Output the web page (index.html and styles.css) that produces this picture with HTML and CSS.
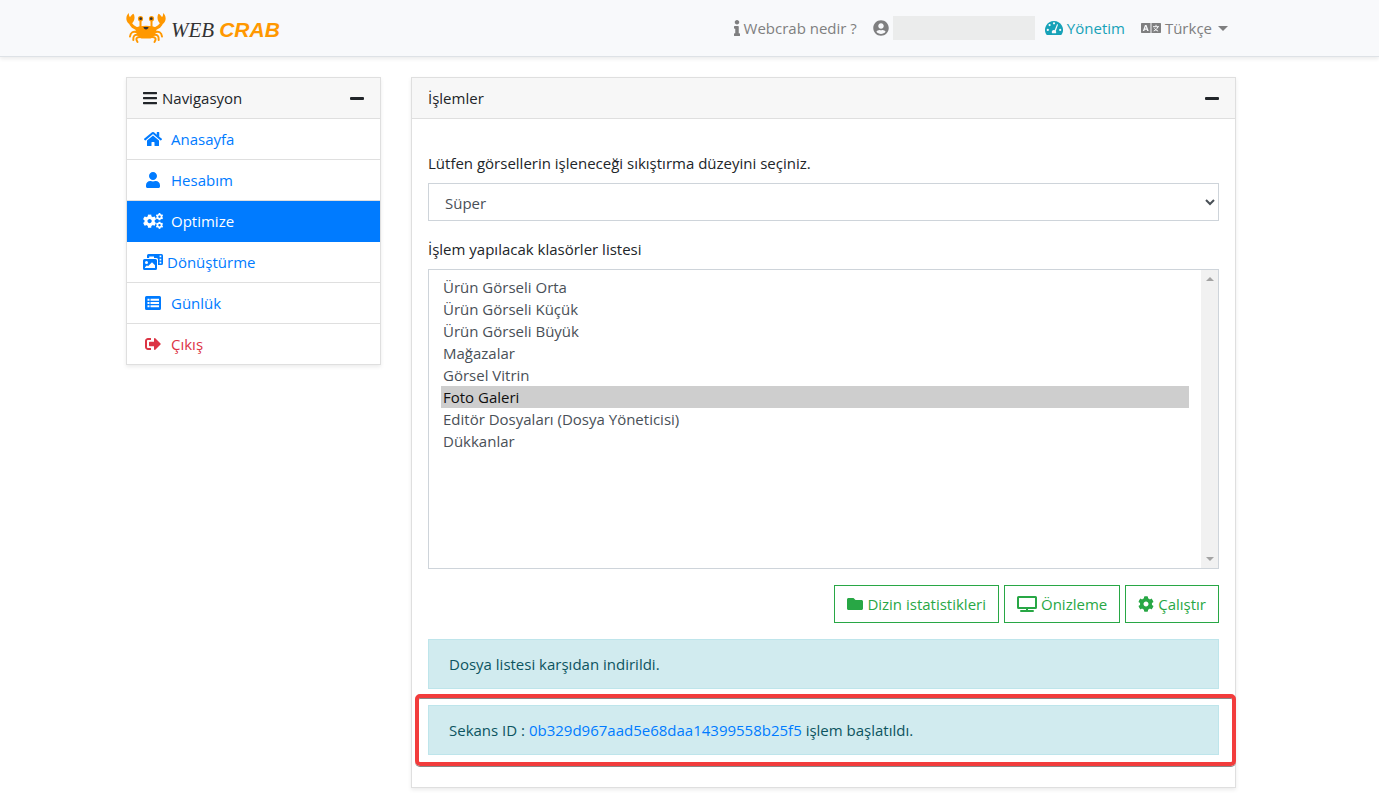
FILE: index.html
```html
<!DOCTYPE html>
<html lang="tr">
<head>
<meta charset="utf-8">
<title>Web Crab</title>
<meta name="viewport" content="width=device-width, initial-scale=1">
<link rel="stylesheet" href="styles.css">
</head>
<body>
<svg class="sprite" aria-hidden="true">
  <symbol id="cog" viewBox="0 0 512 512"><path d="M487.4 315.7l-42.6-24.6c4.3-23.2 4.3-47 0-70.2l42.6-24.6c4.9-2.8 7.1-8.6 5.5-14-11.1-35.6-30-67.8-54.7-94.6-3.8-4.1-10-5.1-14.8-2.3L380.8 110c-17.9-15.4-38.5-27.3-60.8-35.1V25.8c0-5.6-3.9-10.5-9.4-11.7-36.7-8.2-74.3-7.8-109.2 0-5.5 1.2-9.4 6.1-9.4 11.7V75c-22.2 7.9-42.8 19.8-60.8 35.1L88.7 85.5c-4.9-2.8-11-1.9-14.8 2.3-24.7 26.7-43.6 58.9-54.7 94.6-1.7 5.4.6 11.2 5.5 14L67.3 221c-4.3 23.2-4.3 47 0 70.2l-42.6 24.6c-4.9 2.8-7.1 8.6-5.5 14 11.1 35.6 30 67.8 54.7 94.6 3.8 4.1 10 5.1 14.8 2.3l42.6-24.6c17.9 15.4 38.5 27.3 60.8 35.1v49.2c0 5.6 3.9 10.5 9.4 11.7 36.7 8.2 74.3 7.8 109.2 0 5.5-1.2 9.4-6.1 9.4-11.7v-49.2c22.2-7.9 42.8-19.8 60.8-35.1l42.6 24.6c4.9 2.8 11 1.9 14.8-2.3 24.7-26.7 43.6-58.9 54.7-94.6 1.5-5.5-.7-11.3-5.6-14.1zM256 336c-44.1 0-80-35.9-80-80s35.9-80 80-80 80 35.9 80 80-35.9 80-80 80z"/></symbol>
</svg>

<header class="navbar">
  <div class="container navbar-inner">
    <a class="brand" href="#">
      <svg class="crab" viewBox="0 0 40 32" aria-hidden="true">
        <g fill="none" stroke="#ff9800" stroke-width="2" stroke-linecap="round">
          <path d="M4 10C5 14 7.500 15.500 13 17.500M36 10C35 14 32.500 15.500 27 17.500" stroke-width="3"/>
          <path d="M14.500 8v7M25.500 8v7"/>
          <path d="M12 20.500C7 18.500 4.500 20.500 4 24.500M28 20.500C33 18.500 35.500 20.500 36 24.500"/>
          <path d="M13 23C8.500 22 7 24 7.300 28M27 23C31.500 22 33 24 32.700 28"/>
          <path d="M14 25C10 25 9.500 27 11.500 30M26 25C30 25 30.500 27 28.500 30"/>
        </g>
        <g fill="#ff9800">
          <path d="M2.500 11.500C-1 8 .2 3 3 1c-.3 1.800 0 3 1 4.200C5 3.500 6 2.400 7.500 1.700 9.500 5 8.500 9 5.500 12z"/>
          <path d="M37.500 11.500C41 8 39.800 3 37 1c.3 1.800 0 3-1 4.200-1-1.700-2-2.800-3.500-3.500C30.500 5 31.500 9 34.500 12z"/>
          <path d="M9.500 15.800C13 13 27 13 30.500 15.800 31 20 28 25.500 24.500 26.500h-9C12 25.500 9 20 9.500 15.800z"/>
          <circle cx="14.500" cy="6.700" r="2.600"/><circle cx="25.500" cy="6.700" r="2.600"/>
        </g>
        <g fill="#333"><circle cx="14.700" cy="6.700" r="1.400"/><circle cx="25.300" cy="6.700" r="1.400"/><path d="M17.500 15h5c0 3.200-5 3.200-5 0z"/></g>
      </svg>
      <span class="brand-web">WEB</span>
      <span class="brand-crab">CRAB</span>
    </a>
    <nav class="top-nav">
      <a class="top-link" href="#"><svg class="i-info" viewBox="0 0 192 512" aria-hidden="true"><path d="M20 424.229h20V279.771H20c-11.046 0-20-8.954-20-20V212c0-11.046 8.954-20 20-20h112c11.046 0 20 8.954 20 20v212.229h20c11.046 0 20 8.954 20 20V492c0 11.046-8.954 20-20 20H20c-11.046 0-20-8.954-20-20v-47.771c0-11.046 8.954-20 20-20zM96 0C56.235 0 24 32.235 24 72s32.235 72 72 72 72-32.235 72-72S135.764 0 96 0z"/></svg>Webcrab nedir ?</a>
      <a class="top-link top-link-user" href="#" aria-label="Kullanıcı"><svg class="i-16" viewBox="0 0 496 512" aria-hidden="true"><path d="M248 8C111 8 0 119 0 256s111 248 248 248 248-111 248-248S385 8 248 8zm0 96c48.6 0 88 39.4 88 88s-39.4 88-88 88-88-39.4-88-88 39.400-88 88-88zm0 344c-58.700 0-111.300-26.600-146.500-68.200 18.800-35.400 55.600-59.800 98.500-59.800 2.400 0 4.800.4 7.100 1.100 13 4.200 26.600 6.900 40.900 6.900 14.300 0 28-2.700 40.900-6.900 2.300-.7 4.700-1.100 7.100-1.100 42.900 0 79.700 24.400 98.500 59.800C359.300 421.400 306.700 448 248 448z"/></svg><span class="user-name"></span></a>
      <a class="top-link top-link-info" href="#"><svg class="i-18" viewBox="0 0 18 16" aria-hidden="true"><path fill-rule="evenodd" d="M9 1a9 9 0 0 0-7.700 13.600c.2.300.5.400.8.400h13.800c.3 0 .6-.1.800-.4A9 9 0 0 0 9 1zM9 2.200a1.100 1.100 0 1 1 0 2.200 1.100 1.100 0 0 1 0-2.200zM4.600 4a1.100 1.100 0 1 1 0 2.200 1.100 1.100 0 0 1 0-2.200zM2.800 8.800a1.100 1.100 0 1 1 0 2.200 1.100 1.100 0 0 1 0-2.200zM15.200 8.800a1.100 1.100 0 1 1 0 2.200 1.100 1.100 0 0 1 0-2.200zM12 4.200l1.100.4-2.300 6.500c.5.700.5 1.500.1 2.200H7.100c-.7-1.300-.1-2.900 1.400-3.200.4-.1.800 0 1.100.1z"/></svg>Yönetim</a>
      <button class="top-link" type="button"><svg class="i-20" viewBox="0 0 20 16" aria-hidden="true"><path fill-rule="evenodd" d="M.7 3h8.800v10H.7a.7.700 0 0 1-.7-.7V3.700A.7.700 0 0 1 .7 3zm3.300 2L1.800 11h1.500l.4-1.200h2.100l.4 1.200h1.500L5.500 5zM4.750 6.500l.7 2.100H4.050zM10.500 3h8.800a.7.700 0 0 1 .7.7v8.600a.7.700 0 0 1-.7.700h-8.800z"/><path class="knock" d="M15 4.800v1.500M12 6.700h6M16.800 6.900c-.7 2-2.200 3.400-4.100 4.100M13.400 8.200c.8 1.400 2 2.300 3.700 2.900"/></svg>Türkçe<span class="caret"></span></button>
    </nav>
  </div>
</header>

<main class="container page">
  <aside class="card sidebar">
    <div class="card-header">
      <span class="card-title"><svg class="i-14" viewBox="0 0 448 512" aria-hidden="true"><path d="M16 132h416c8.837 0 16-7.163 16-16V76c0-8.837-7.163-16-16-16H16C7.163 60 0 67.163 0 76v40c0 8.837 7.163 16 16 16zm0 160h416c8.837 0 16-7.163 16-16v-40c0-8.837-7.163-16-16-16H16c-8.837 0-16 7.163-16 16v40c0 8.837 7.163 16 16 16zm0 160h416c8.837 0 16-7.163 16-16v-40c0-8.837-7.163-16-16-16H16c-8.837 0-16 7.163-16 16v40c0 8.837 7.163 16 16 16z"/></svg>Navigasyon</span>
      <button class="collapse" type="button" aria-label="Daralt"><span class="minus"></span></button>
    </div>
    <nav class="side-nav">
      <a class="side-link" href="#"><svg class="i-20" viewBox="-32 0 640 512" aria-hidden="true"><path d="M280.370 148.260L96 300.110V464a16 16 0 0 0 16 16l112.060-.29a16 16 0 0 0 15.920-16V368a16 16 0 0 1 16-16h64a16 16 0 0 1 16 16v95.640a16 16 0 0 0 16 16.050L464 480a16 16 0 0 0 16-16V300L295.670 148.260a12.190 12.190 0 0 0-15.300 0zM571.600 251.470L488 182.560V44.050a12 12 0 0 0-12-12h-56a12 12 0 0 0-12 12v72.610L318.470 43a48 48 0 0 0-61 0L4.340 251.470a12 12 0 0 0-1.600 16.900l25.500 31A12 12 0 0 0 45.150 301l235.220-193.740a12.190 12.190 0 0 1 15.300 0L530.900 301a12 12 0 0 0 16.900-1.600l25.500-31a12 12 0 0 0-1.700-16.930z"/></svg>Anasayfa</a>
      <a class="side-link" href="#"><svg class="i-20" viewBox="-96 0 640 512" aria-hidden="true"><path d="M224 256c70.700 0 128-57.300 128-128S294.700 0 224 0 96 57.300 96 128s57.300 128 128 128zm89.600 32h-16.700c-22.200 10.200-46.900 16-72.900 16s-50.600-5.800-72.900-16h-16.700C60.200 288 0 348.200 0 422.400V464c0 26.500 21.500 48 48 48h352c26.500 0 48-21.500 48-48v-41.600c0-74.200-60.200-134.400-134.400-134.400z"/></svg>Hesabım</a>
      <a class="side-link active" href="#" aria-current="page"><svg class="i-20" viewBox="0 0 20 16" aria-hidden="true"><use href="#cog" x="-0.300" y="1.200" width="13.800" height="13.800"/><use href="#cog" x="12.700" y="0" width="7.600" height="7.600"/><use href="#cog" x="12.700" y="8.400" width="7.600" height="7.600"/></svg>Optimize</a>
      <a class="side-link side-link-tight" href="#"><svg class="i-20" viewBox="0 0 20 16" aria-hidden="true"><path fill-rule="evenodd" d="M5.500 0h13A1.500 1.500 0 0 1 20 1.500v8a1.500 1.500 0 0 1-1.500 1.500H15V5.500A1.500 1.500 0 0 0 13.500 4H11V2.500H6.200V4H4V1.500A1.500 1.500 0 0 1 5.500 0zM16.600 1.600v1.700h1.700V1.600zM16.600 4.700v1.700h1.700V4.700zM16.600 7.800v1.700h1.700V7.800zM1.500 5h11A1.500 1.500 0 0 1 14 6.500v8a1.500 1.500 0 0 1-1.500 1.500h-11A1.500 1.500 0 0 1 0 14.500v-8A1.500 1.500 0 0 1 1.500 5zM3.500 7a1.500 1.500 0 1 0 0 3 1.500 1.500 0 0 0 0-3zM2 14h10v-2.700L9 8.300l-4 4-1-1-2 2z"/></svg>Dönüştürme</a>
      <a class="side-link" href="#"><svg class="i-20" viewBox="0 0 20 16" aria-hidden="true"><path fill-rule="evenodd" d="M3.500 1h13A1.500 1.500 0 0 1 18 2.500v11a1.500 1.500 0 0 1-1.500 1.500h-13A1.500 1.500 0 0 1 2 13.500v-11A1.500 1.500 0 0 1 3.500 1zM4.500 3.700v2h2v-2zM7.500 3.700v2h8.500v-2zM4.500 7v2h2V7zM7.500 7v2h8.500V7zM4.500 10.300v2h2v-2zM7.500 10.300v2h8.500v-2z"/></svg>Günlük</a>
      <a class="side-link danger" href="#"><svg class="i-20" viewBox="-64 0 640 512" aria-hidden="true"><path d="M497 273L329 441c-15 15-41 4.500-41-17v-96H152c-13.300 0-24-10.700-24-24v-96c0-13.300 10.700-24 24-24h136V88c0-21.400 25.900-32 41-17l168 168c9.300 9.400 9.300 24.600 0 34zM192 436v-40c0-6.600-5.400-12-12-12H96c-17.700 0-32-14.300-32-32V160c0-17.700 14.300-32 32-32h84c6.600 0 12-5.400 12-12V76c0-6.600-5.400-12-12-12H96c-53 0-96 43-96 96v192c0 53 43 96 96 96h84c6.600 0 12-5.400 12-12z"/></svg>Çıkış</a>
    </nav>
  </aside>

  <section class="card content">
    <div class="card-header">
      <span class="card-title">İşlemler</span>
      <button class="collapse" type="button" aria-label="Daralt"><span class="minus"></span></button>
    </div>
    <form class="card-body">
      <div class="field">
        <label for="level">Lütfen görsellerin işleneceği sıkıştırma düzeyini seçiniz.</label>
        <select class="control level" id="level"><option>Süper</option></select>
      </div>
      <div class="field">
        <label for="folders">İşlem yapılacak klasörler listesi</label>
        <div class="control listbox">
          <select class="folders" id="folders" multiple>
            <option>Ürün Görseli Orta</option>
            <option>Ürün Görseli Küçük</option>
            <option>Ürün Görseli Büyük</option>
            <option>Mağazalar</option>
            <option>Görsel Vitrin</option>
            <option selected>Foto Galeri</option>
            <option>Editör Dosyaları (Dosya Yöneticisi)</option>
            <option>Dükkanlar</option>
          </select>
          <div class="scroll-track" aria-hidden="true"><span class="arrow-up"></span><span class="arrow-down"></span></div>
        </div>
      </div>
      <div class="actions">
        <button class="btn" type="button"><svg class="i-16" viewBox="0 0 512 512" aria-hidden="true"><path d="M464 128H272l-64-64H48C21.490 64 0 85.490 0 112v288c0 26.510 21.490 48 48 48h416c26.510 0 48-21.490 48-48V176c0-26.510-21.490-48-48-48z"/></svg>Dizin istatistikleri</button>
        <button class="btn" type="button"><svg class="i-20" viewBox="0 0 20 16" aria-hidden="true"><path fill-rule="evenodd" d="M1.500 0h17A1.500 1.500 0 0 1 20 1.500v10a1.500 1.500 0 0 1-1.500 1.500H11v1h5a1 1 0 0 1 0 2H4a1 1 0 0 1 0-2h5v-1H1.500A1.500 1.500 0 0 1 0 11.500v-10A1.500 1.500 0 0 1 1.500 0zM2 2v9h16V2z"/></svg>Önizleme</button>
        <button class="btn" type="button"><svg class="i-16" viewBox="0 0 512 512" aria-hidden="true"><use href="#cog"/></svg>Çalıştır</button>
      </div>
      <div class="alert">Dosya listesi karşıdan indirildi.</div>
      <div class="alert highlighted">Sekans ID : <a href="#">0b329d967aad5e68daa14399558b25f5</a> işlem başlatıldı.</div>
    </form>
  </section>
</main>
</body>
</html>
```
FILE: styles.css
```css
*, *::before, *::after { box-sizing: border-box; }

body {
  margin: 0;
  background: #fff;
  color: #212529;
  font-family: "Open Sans", "Noto Sans", sans-serif;
  font-size: 15px;
  line-height: 24px;
}

a { color: #007bff; text-decoration: none; }
button, select { font: inherit; }
button { cursor: pointer; }
svg { flex: none; fill: currentColor; }

.sprite { display: none; }
.i-info { width: 6px; height: 16px; }
.i-14 { width: 14px; height: 16px; }
.i-16 { width: 16px; height: 16px; }
.i-18 { width: 18px; height: 16px; }
.i-20 { width: 20px; height: 16px; }

.container {
  width: 100%;
  max-width: 1110px;
  margin: 0 auto;
}

.navbar {
  padding: 0 17px 0 0;
  background: #f8f9fb;
  border-bottom: 1px solid #dee2e6;
  box-shadow: 0 2px 4px rgba(0, 0, 0, .08);
}

.navbar-inner {
  display: flex;
  align-items: center;
  justify-content: space-between;
  height: 56px;
}

.brand { display: flex; align-items: center; font-size: 21px; }
.crab { width: 40px; height: 32px; }
.brand-web {
  margin: 4px 5px 0;
  color: #333;
  font-family: "Liberation Serif", serif;
  font-style: italic;
}
.brand-crab {
  margin-top: 4px;
  color: #ff9800;
  font-family: "Liberation Sans", sans-serif;
  font-style: italic;
  font-weight: bold;
}

.top-nav { display: flex; align-items: center; }
.top-link {
  display: flex;
  align-items: center;
  gap: 4px;
  padding: 8px;
  border: 0;
  background: none;
  color: #7f7f80;
}
.top-link-user { padding-right: 2px; }
.top-link-info { color: #17a2b8; }
.user-name { width: 142px; height: 24px; background: #ebecec; }
.knock { fill: none; stroke: #f8f9fb; }
.caret {
  margin-left: 2px;
  border-top: 5px solid;
  border-right: 5px solid transparent;
  border-left: 5px solid transparent;
}

.page {
  display: grid;
  grid-template-columns: 255px minmax(0, 1fr);
  gap: 30px;
  align-items: start;
  max-width: 1127px;
  padding: 20px 17px 16px 0;
}

.card {
  border: 1px solid #dfdfdf;
  background: #fff;
  box-shadow: 0 2px 4px rgba(0, 0, 0, .08);
}
.card-header {
  display: flex;
  align-items: center;
  justify-content: space-between;
  padding: 8px 16px;
  border-bottom: 1px solid #dfdfdf;
  background: #f7f7f7;
}
.card-title { display: flex; align-items: center; gap: 5px; }
.collapse {
  display: flex;
  padding: 4px 0;
  border: 0;
  background: none;
}
.minus { width: 14px; height: 3px; border-radius: 1px; background: #212529; }

.side-link {
  display: flex;
  align-items: center;
  gap: 8px;
  padding: 8px 16px;
  border-bottom: 1px solid #dfdfdf;
}
.side-link:last-child { border-bottom: 0; }
.side-link-tight { gap: 4px; }
.side-link.active { border-color: #007bff; background: #007bff; color: #fff; }
.side-link.danger { color: #dc3545; }

.card-body { padding: 32px 16px 16px; }
.field { margin-bottom: 16px; }
.field label { display: block; margin-bottom: 8px; }
.control {
  width: 100%;
  border: 1px solid #ced4da;
  border-radius: 0;
  background-color: #fff;
  color: #495057;
}
.level { display: block; height: 38px; padding: 7px 0 5px 12px; }
.listbox { display: flex; height: 300px; }
.folders {
  flex: 1;
  min-width: 0;
  padding: 6px 12px;
  border: 0;
  outline: 0;
  background: none;
  color: inherit;
  scrollbar-width: none;
}
.folders option { height: 22px; min-height: 22px; padding: 1px 2px 0; line-height: 21px; }
.folders option:checked { background: #cecece; color: #101010; }
.scroll-track {
  display: flex;
  flex-direction: column;
  align-items: center;
  justify-content: space-between;
  width: 17px;
  padding: 7px 0;
  background: #f1f1f1;
}
.arrow-up, .arrow-down {
  border-right: 4px solid transparent;
  border-left: 4px solid transparent;
}
.arrow-up { border-bottom: 4px solid #a3a3a3; }
.arrow-down { border-top: 4px solid #a3a3a3; }

.actions {
  display: flex;
  flex-wrap: wrap;
  justify-content: flex-end;
  gap: 5px;
  margin-bottom: 16px;
}
.btn {
  display: flex;
  align-items: center;
  gap: 4px;
  padding: 6px 12px;
  border: 1px solid #28a745;
  background: #fff;
  color: #28a745;
}

.alert {
  margin-bottom: 16px;
  padding: 12px 20px;
  border: 1px solid #bee5eb;
  background: #d1ebef;
  color: #0c5460;
}
.highlighted { position: relative; }
.highlighted::after {
  content: "";
  position: absolute;
  inset: -12px -18px -12px -14px;
  border: 4px solid #f23c3c;
  border-radius: 5px;
  box-shadow: 0 1px 0 #888, inset 0 1px 0 #888;
  pointer-events: none;
}
```
